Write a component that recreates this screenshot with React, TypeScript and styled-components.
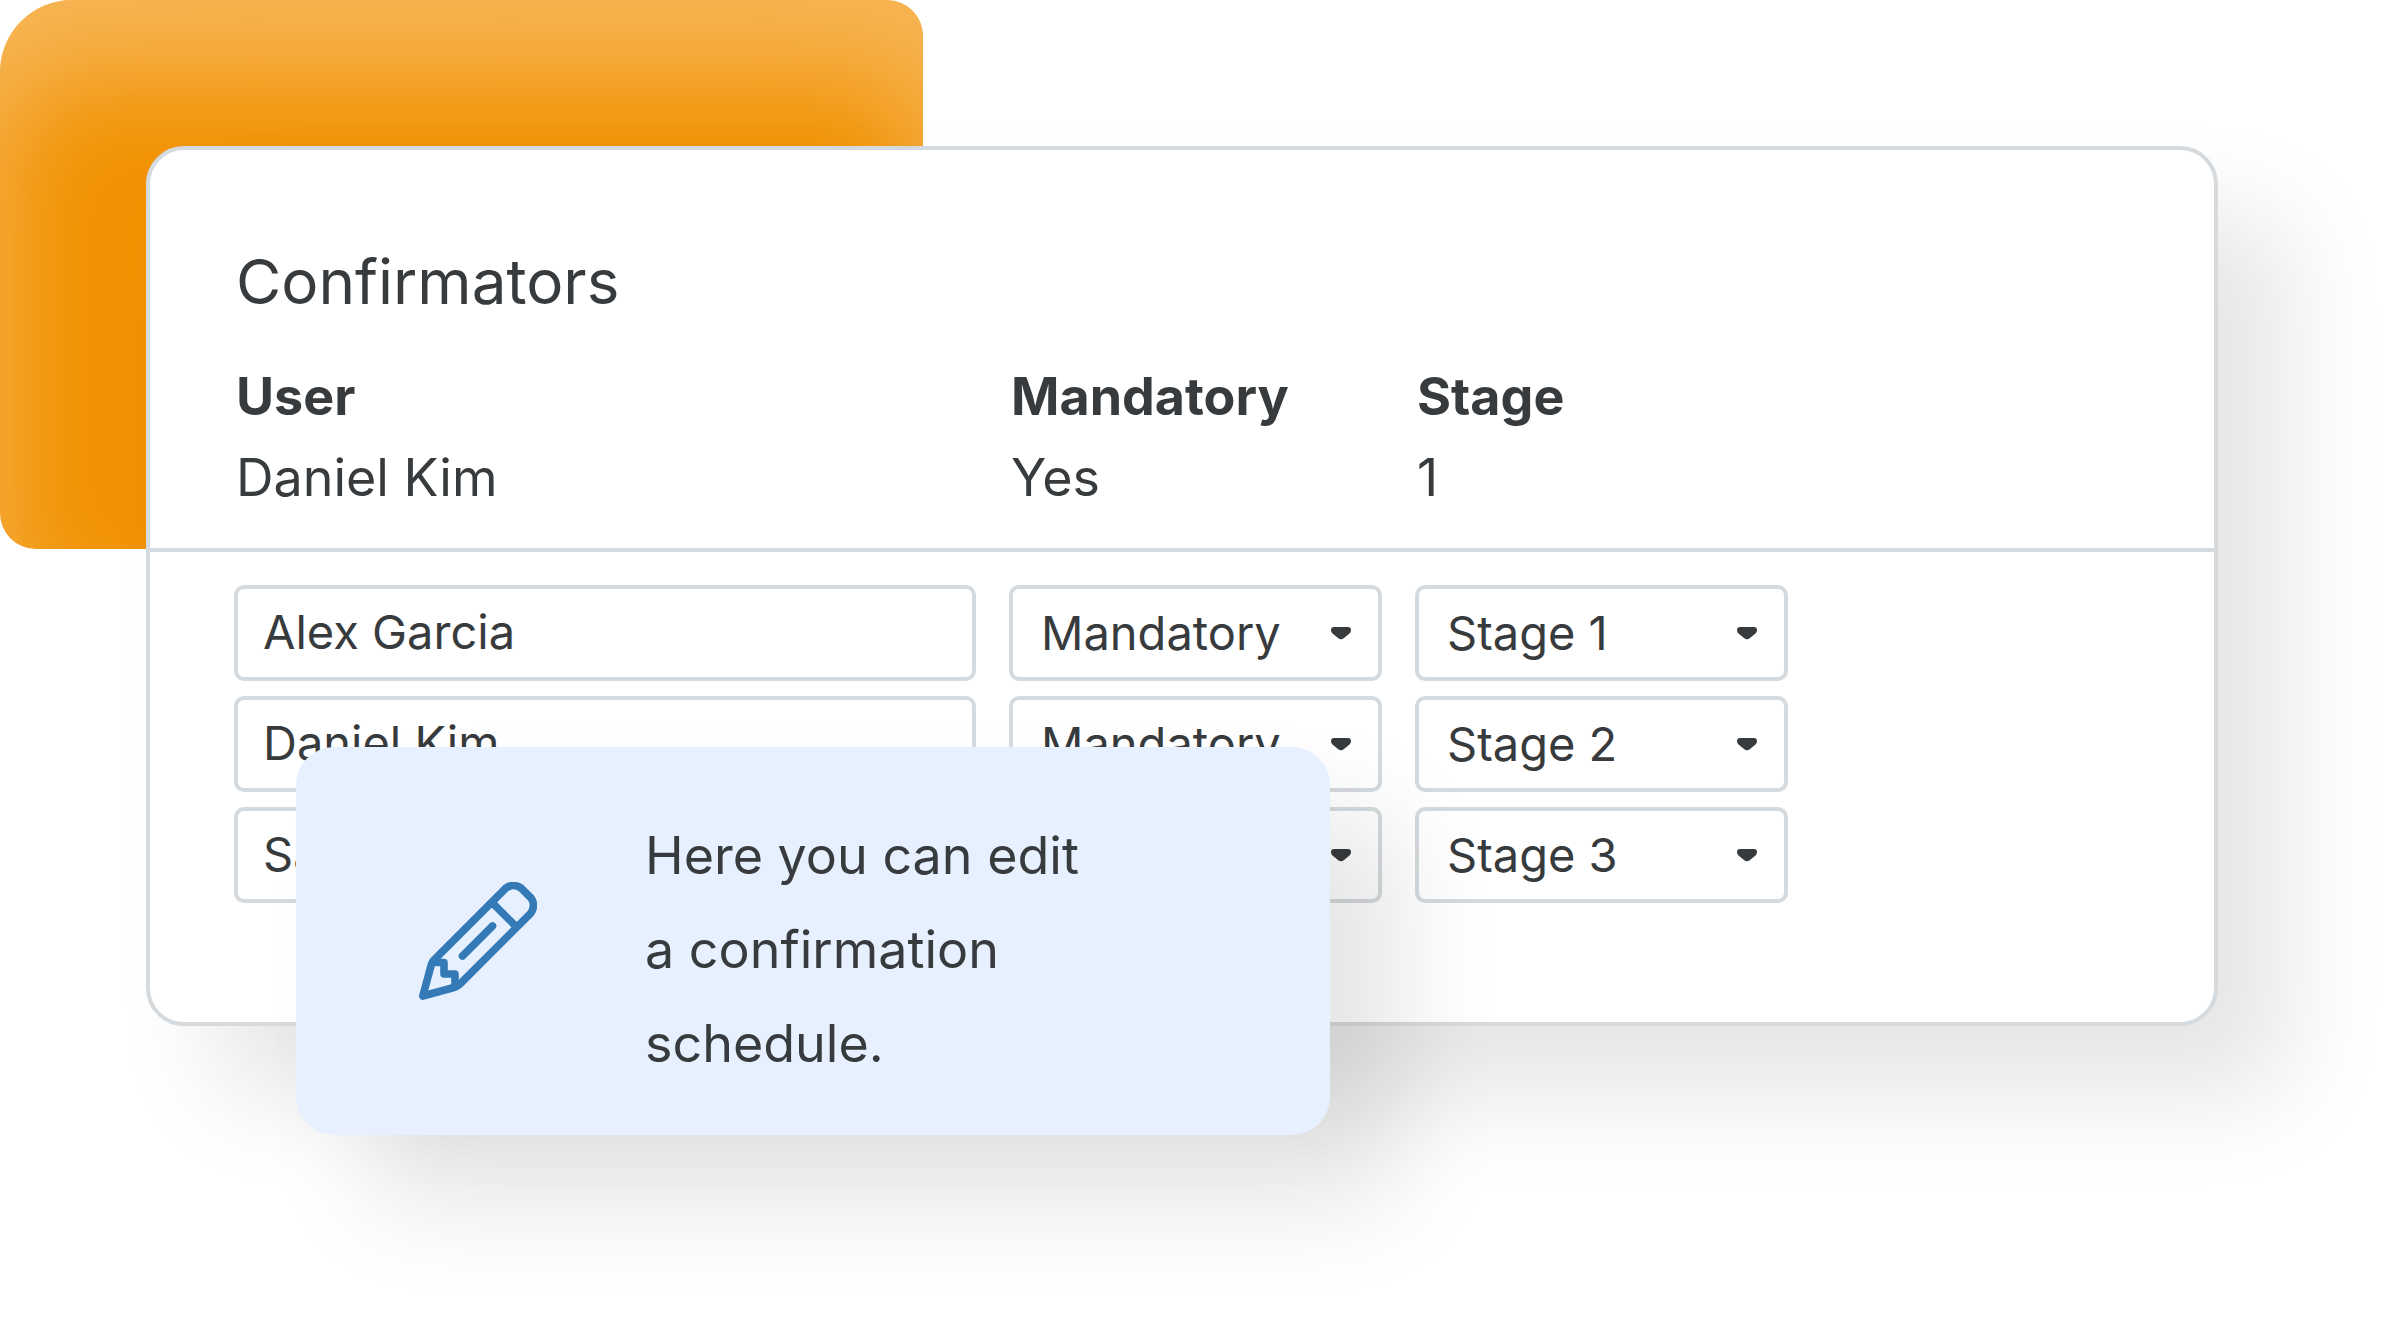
import React from "react";
import styled, { createGlobalStyle } from "styled-components";

const ink = "#383b3d";
const line = "#d5dade";
const shadow = "70px 70px 104px rgba(0, 0, 0, 0.1)";

const GlobalStyle = createGlobalStyle`
  * { box-sizing: border-box; }
  body {
    margin: 0;
    background: #fff;
    color: ${ink};
    font-family: Inter, "Liberation Sans", sans-serif;
    overflow-x: hidden;
  }
`;

const Page = styled.main`
  position: relative;
  padding: 146px 182px 290px 146px;
`;

const Backdrop = styled.div`
  position: absolute;
  top: 0;
  left: 0;
  width: 923px;
  height: 549px;
  border-radius: 72px 36px 36px 36px;
  background: #f29100;
  box-shadow: inset 0 76px 116px rgba(255, 255, 255, 0.34);
`;

const Card = styled.section`
  position: relative;
  border: 4px solid ${line};
  border-radius: 38px;
  background: #fff;
  box-shadow: ${shadow};
`;

const Overview = styled.div`
  padding: 96px 426px 30px 84px;
  border-bottom: 4px solid ${line};
`;

const Title = styled.h1`
  margin: 0 0 38px;
  padding-left: 2px;
  font-size: 62px;
  font-weight: 400;
  line-height: 72px;
`;

const columns = `
  display: grid;
  grid-template-columns: 742fr 373fr 373fr;
  column-gap: 33px;
`;

const Table = styled.table`
  display: block;
  font-size: 52px;
  line-height: 81px;
  text-align: left;

  thead, tbody { display: block; }
  tr { ${columns} }
  th, td { padding: 0 0 0 2px; }
  th { font-weight: 700; }
`;

const Form = styled.form`
  display: grid;
  row-gap: 15px;
  padding: 33px 426px 119px 84px;
`;

const Row = styled.div`
  ${columns}
`;

const field = `
  display: block;
  width: 100%;
  height: 96px;
  margin: 0;
  border: 4px solid ${line};
  border-radius: 10px;
  background: transparent;
  color: inherit;
  font-family: inherit;
  font-size: 47px;
  outline: none;
`;

const TextInput = styled.input`
  ${field}
  padding: 0 25px 3px;
`;

const SelectBox = styled.div`
  position: relative;
`;

const Select = styled.select`
  ${field}
  appearance: none;
  padding: 0 60px 2px 28px;
`;

const Caret = styled.svg`
  position: absolute;
  top: 42px;
  right: 31px;
  width: 20px;
  height: 13px;
  pointer-events: none;
`;

const Hint = styled.aside`
  position: absolute;
  top: 747px;
  left: 296px;
  display: flex;
  align-items: center;
  gap: 108px;
  width: 1034px;
  height: 388px;
  padding: 0 120px 0 123px;
  border-radius: 38px;
  background: #e7f0ff;
  box-shadow: ${shadow};
`;

const HintText = styled.p`
  margin: 0;
  padding-top: 18px;
  font-size: 52px;
  line-height: 94px;
`;

const PencilSvg = styled.svg`
  flex: none;
  width: 118px;
  height: 118px;
`;

function Pencil() {
  return (
    <PencilSvg
      viewBox="0 0 118 118"
      fill="none"
      stroke="#337ab7"
      strokeWidth="7.6"
      strokeLinecap="round"
      strokeLinejoin="round"
      aria-hidden="true"
    >
      <path d="M16 77 L87 6 Q94.500 1 102 6 L112 16 Q117 23 112 31 L41 102 Q38 104.500 35 105.500 L3.800 114 L12.500 82 Q13.500 79 16 77 Z" />
      <path d="M74.500 22 L95.500 43" />
      <path d="M73.500 44 L43.500 74" />
      <path d="M15 80.500 H25 V92 H36 V103" />
    </PencilSvg>
  );
}

function Dropdown({ label, value, options }: { label: string; value: string; options: string[] }) {
  return (
    <SelectBox>
      <Select aria-label={label} defaultValue={value}>
        {options.map((o) => (
          <option key={o}>{o}</option>
        ))}
      </Select>
      <Caret viewBox="0 0 20 13" aria-hidden="true">
        <path
          d="M3 0 H17 Q20 0 20 3 Q20 5 18.500 6.500 L13 11 Q10 13.500 7 11 L1.500 6.500 Q0 5 0 3 Q0 0 3 0 Z"
          fill={ink}
        />
      </Caret>
    </SelectBox>
  );
}

const confirmators = [
  { user: "Alex Garcia", stage: "Stage 1" },
  { user: "Daniel Kim", stage: "Stage 2" },
  { user: "Sam Lee", stage: "Stage 3" },
];

export default function App() {
  return (
    <Page>
      <GlobalStyle />
      <Backdrop />
      <Card>
        <Overview>
          <Title>Confirmators</Title>
          <Table>
            <thead>
              <tr>
                <th>User</th>
                <th>Mandatory</th>
                <th>Stage</th>
              </tr>
            </thead>
            <tbody>
              <tr>
                <td>Daniel Kim</td>
                <td>Yes</td>
                <td>1</td>
              </tr>
            </tbody>
          </Table>
        </Overview>
        <Form>
          {confirmators.map((c) => (
            <Row key={c.user}>
              <TextInput aria-label="User" defaultValue={c.user} />
              <Dropdown label="Mandatory" value="Mandatory" options={["Mandatory", "Optional"]} />
              <Dropdown label="Stage" value={c.stage} options={["Stage 1", "Stage 2", "Stage 3"]} />
            </Row>
          ))}
        </Form>
      </Card>
      <Hint>
        <Pencil />
        <HintText>
          Here you can edit
          <br />a confirmation
          <br />
          schedule.
        </HintText>
      </Hint>
    </Page>
  );
}
